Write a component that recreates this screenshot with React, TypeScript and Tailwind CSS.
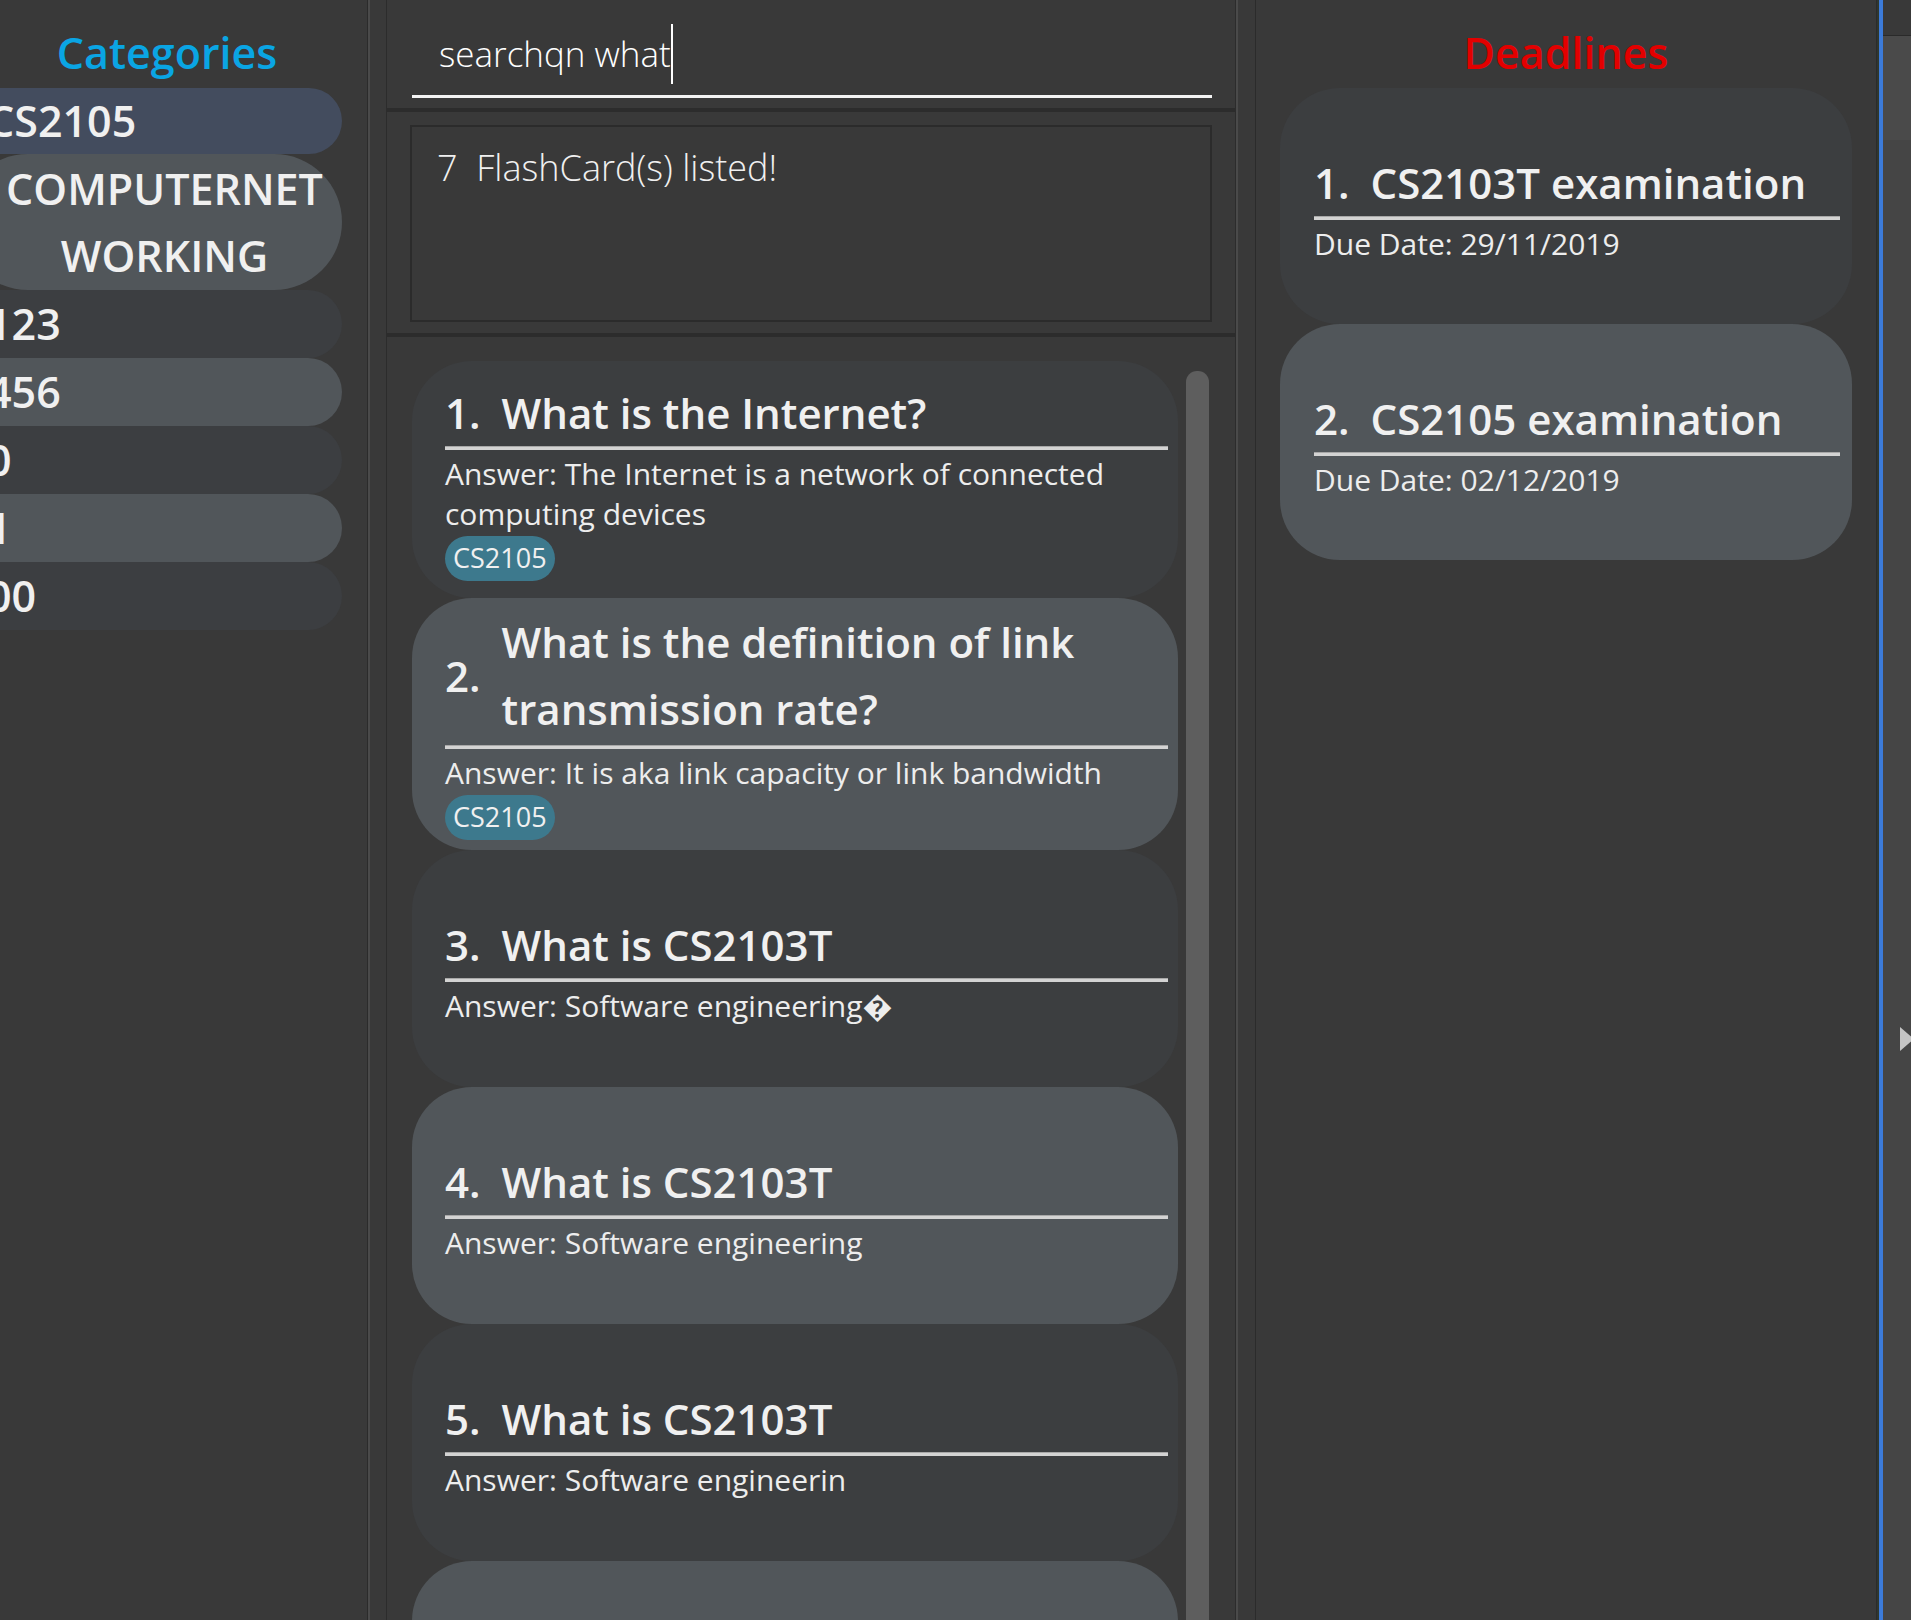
import React from 'react';

type Flash = { q: string[]; a: string[]; tags?: string[] };

const categories = [
  { name: 'CS2105', tone: 'bg-[#434c5e]', tall: false },
  { name: 'COMPUTERNET\nWORKING', tone: 'bg-[#51565a]', tall: true },
  { name: '123', tone: 'bg-[#3c3e41]', tall: false },
  { name: '456', tone: 'bg-[#51565a]', tall: false },
  { name: '0', tone: 'bg-[#3c3e41]', tall: false },
  { name: '1', tone: 'bg-[#51565a]', tall: false },
  { name: '00', tone: 'bg-[#3c3e41]', tall: false },
];

const flashcards: Flash[] = [
  {
    q: ['What is the Internet?'],
    a: ['Answer: The Internet is a network of connected', 'computing devices'],
    tags: ['CS2105'],
  },
  {
    q: ['What is the definition of link', 'transmission rate?'],
    a: ['Answer: It is aka link capacity or link bandwidth'],
    tags: ['CS2105'],
  },
  { q: ['What is CS2103T'], a: ['Answer: Software engineering\uFFFD'] },
  { q: ['What is CS2103T'], a: ['Answer: Software engineering'] },
  { q: ['What is CS2103T'], a: ['Answer: Software engineerin'] },
  { q: ['What is CS2103T'], a: ['Answer: Software engineering'] },
];

const deadlines = [
  { task: 'CS2103T examination', due: '29/11/2019' },
  { task: 'CS2105 examination', due: '02/12/2019' },
];

const Rule = () => <div className="h-[4px] border-t border-[#a8a8a8] bg-[#d3d3d3]" />;

const Heading: React.FC<{ num: number; lines: string[] }> = ({ num, lines }) => (
  <div className="flex items-center gap-[21px] text-[42px] font-semibold leading-[67px] text-[#f0f0f0]">
    <span>{num}.</span>
    <div>
      {lines.map(l => (
        <div key={l} className="whitespace-nowrap">{l}</div>
      ))}
    </div>
  </div>
);

const FlashCardItem: React.FC<{ card: Flash; index: number }> = ({ card, index }) => (
  <div
    className={`flex min-h-[237px] shrink-0 flex-col justify-center rounded-[60px] py-[10px] pl-[33px] pr-[10px] ${
      index % 2 === 0 ? 'bg-[#3c3e40]' : 'bg-[#51565a]'
    }`}
  >
    <Heading num={index + 1} lines={card.q} />
    <div className={card.q.length > 1 ? 'mt-[3px]' : ''}>
      <Rule />
    </div>
    <div className="mt-[4px] text-[30px] leading-[40px] text-[#ededed]">
      {card.a.map(l => (
        <div key={l} className="whitespace-nowrap">{l}</div>
      ))}
    </div>
    {card.tags && (
      <div className="mt-[2px] flex gap-2">
        {card.tags.map(t => (
          <span
            key={t}
            className="flex h-[45px] items-center rounded-full bg-[#3d798d] px-[8px] text-[27px] text-[#f0f0f0]"
          >
            {t}
          </span>
        ))}
      </div>
    )}
  </div>
);

export default function App() {
  return (
    <div className="flex h-[1620px] w-full overflow-hidden bg-[#393939] text-[#f0f0f0] [font-family:'Open_Sans','DejaVu_Sans',sans-serif]">
      {/* categories */}
      <aside className="flex w-[367px] shrink-0 flex-col">
        <h2 className="h-[88px] w-[334px] shrink-0 pt-[25px] text-center text-[43px] font-semibold leading-[56px] text-[#0aa5e4]">
          Categories
        </h2>
        <div className="flex-1 overflow-hidden">
          <div className="-ml-[40px] w-[382px]">
            {categories.map(c => (
              <div
                key={c.name}
                className={`flex items-center rounded-full pl-[27px] text-[43px] font-semibold ${c.tone} ${
                  c.tall ? 'h-[136px]' : c.name === 'CS2105' ? 'h-[66px]' : 'h-[68px]'
                }`}
              >
                {c.tall ? (
                  <div className="w-full whitespace-pre text-center leading-[67px]">{c.name}</div>
                ) : (
                  <span className="whitespace-nowrap">{c.name}</span>
                )}
              </div>
            ))}
          </div>
        </div>
      </aside>
      <div className="w-[1px] shrink-0 bg-[#2b2b2b]" />
      <div className="w-[2px] shrink-0 bg-[#4a4a4a]" />
      <div className="w-[16px] shrink-0" />

      {/* command / result / list */}
      <main className="flex w-[850px] shrink-0 flex-col gap-[4px] bg-[#2c2c2c] px-[1px]">
        <section className="h-[108px] shrink-0 bg-[#393939] pl-[25px]">
          <div className="h-[98px] w-[800px] border-b-[3px] border-[#f4f4f4] pl-[27px] pt-[24px]">
            <div className="flex h-[60px] items-center text-[35px] font-light leading-[60px] text-white">
              <span>searchqn what</span>
              <span className="h-[60px] w-[2px] bg-white" />
            </div>
          </div>
        </section>
        <section className="h-[221px] shrink-0 bg-[#393939] pl-[23px] pt-[13px]">
          <div className="h-[197px] w-[802px] border-2 border-[#2b2b2b] pl-[25px] pt-[17px]">
            <div className="text-[36px] font-light leading-[48px] text-[#f0f0f0]">
              7&nbsp;&nbsp;FlashCard(s) listed!
            </div>
          </div>
        </section>
        <section className="flex min-h-0 flex-1 overflow-hidden bg-[#393939] pl-[25px] pt-[24px]">
          <div className="flex w-[766px] shrink-0 flex-col">
            {flashcards.map((c, i) => (
              <FlashCardItem key={i} card={c} index={i} />
            ))}
          </div>
          <div className="ml-[8px] mt-[10px] w-[23px] shrink-0 rounded-t-[11px] bg-[#5e5e5e]" />
        </section>
      </main>
      <div className="w-[2px] shrink-0 bg-[#4a4a4a]" />
      <div className="w-[17px] shrink-0" />

      {/* deadlines */}
      <aside className="flex w-[621px] shrink-0 flex-col border-l border-[#2b2b2b]">
        <h2 className="h-[88px] shrink-0 pt-[25px] text-center text-[43px] font-semibold leading-[56px] text-[#e30000]">
          Deadlines
        </h2>
        <div className="flex flex-col px-[24px]">
          {deadlines.map((d, i) => (
            <div
              key={d.task}
              className={`flex min-h-[236px] shrink-0 flex-col justify-center rounded-[60px] pl-[34px] pr-[12px] ${
                i % 2 === 0 ? 'bg-[#3c3e40]' : 'bg-[#51565a]'
              }`}
            >
              <Heading num={i + 1} lines={[d.task]} />
              <Rule />
              <div className="mt-[4px] text-[30px] leading-[40px] text-[#ededed]">Due Date: {d.due}</div>
            </div>
          ))}
        </div>
      </aside>
      <div className="w-[1px] shrink-0 bg-[#2b2b2b]" />
      <div className="w-[2px] shrink-0 bg-[#2f372f]" />
      <div className="w-[4px] shrink-0 bg-[#3c7bd9]" />

      {/* collapsed side pane */}
      <div className="relative flex flex-1 flex-col">
        <div className="h-[36px] shrink-0 border-b border-[#2a2a2a] bg-[#393939]" />
        <div className="h-[104px] shrink-0 bg-[#4a4a4a]" />
        <div className="flex-1 bg-[#454545]" />
        <div className="absolute right-[-3px] top-[1027px] h-0 w-0 border-y-[12px] border-l-[14px] border-y-transparent border-l-[#c4c4c4]" />
      </div>
    </div>
  );
}
